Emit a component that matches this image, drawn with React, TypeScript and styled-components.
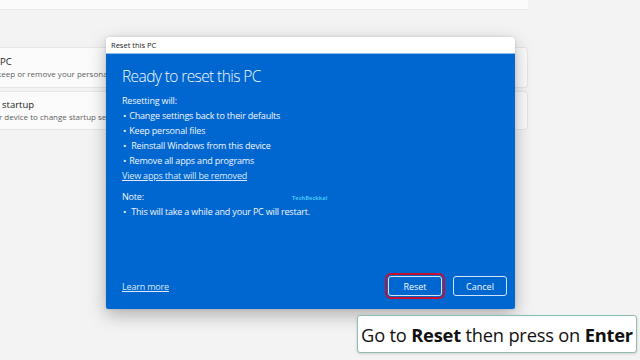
import styled, { createGlobalStyle } from "styled-components";

const GlobalStyle = createGlobalStyle`
  html, body {
    margin: 0;
    padding: 0;
    background: #f3f3f3;
  }
  body {
    font-family: "Open Sans", "Noto Sans", sans-serif;
  }
`;

const Screen = styled.div`
  position: relative;
  width: 640px;
  height: 360px;
  overflow: hidden;
  background: #f3f3f3;
`;

const SettingsColumn = styled.div`
  width: 528px;
  display: flex;
  flex-direction: column;
  gap: 3px;
`;

const TopCard = styled.div`
  height: 9px;
  background: #fbfbfb;
  border-bottom: 1px solid #e8e8e8;
  margin-bottom: 34px;
`;

const SettingCard = styled.div<{ $height: number }>`
  height: ${(p) => p.$height}px;
  background: #fbfbfb;
  border: 1px solid #e6e6e6;
  border-left: none;
  border-radius: 0 4px 4px 0;
  display: flex;
  flex-direction: column;
  justify-content: center;
  box-sizing: border-box;
  overflow: hidden;
`;

const SettingTitle = styled.div<{ $indent?: number }>`
  font-size: 9.5px;
  color: #1b1b1b;
  line-height: 12px;
  margin-left: ${(p) => p.$indent ?? 0}px;
  white-space: nowrap;
`;

const SettingSub = styled.div<{ $indent?: number }>`
  font-size: 8px;
  color: #5f5f5f;
  line-height: 11px;
  margin-left: ${(p) => p.$indent ?? 0}px;
  white-space: nowrap;
`;

const Dialog = styled.div`
  position: absolute;
  left: 106px;
  top: 37px;
  width: 409px;
  height: 272px;
  display: flex;
  flex-direction: column;
  border-radius: 4px 4px 2px 2px;
  overflow: hidden;
  box-shadow: 0 6px 18px rgba(0, 0, 0, 0.28), 0 0 3px rgba(0, 0, 0, 0.12);
`;

const TitleBar = styled.div`
  height: 17px;
  flex: none;
  background: #ffffff;
  border-bottom: 1px solid #8cc0f0;
  box-sizing: border-box;
  display: flex;
  align-items: center;
  padding-left: 5px;
  font-size: 7.5px;
  color: #1a1a1a;
`;

const DialogBody = styled.div`
  position: relative;
  flex: 1;
  background: #0067d0;
  color: #f2f6fc;
  display: flex;
  flex-direction: column;
  padding: 12px 8px 13px 16px;
`;

const Heading = styled.h1`
  margin: 0 0 7px;
  font-size: 15.5px;
  font-weight: 300;
  line-height: 20px;
  letter-spacing: -0.6px;
  color: #f4f8fd;
`;

const Line = styled.div<{ $indent?: number }>`
  font-size: 9px;
  line-height: 15px;
  padding-left: ${(p) => p.$indent ?? 0}px;
  white-space: nowrap;
  letter-spacing: -0.18px;
`;

const Bullet = styled.span<{ $gap: number }>`
  margin-right: ${(p) => p.$gap}px;
`;

const Link = styled.a<{ $drop?: number }>`
  font-size: 9px;
  line-height: 15px;
  color: #dbe9fa;
  text-decoration: underline;
  letter-spacing: -0.18px;
  align-self: flex-start;
  padding-top: ${(p) => p.$drop ?? 0}px;
`;

const Gap = styled.div<{ $h: number }>`
  height: ${(p) => p.$h}px;
`;

const Watermark = styled.span`
  position: absolute;
  left: 186px;
  top: 140px;
  font-size: 5.5px;
  font-weight: 700;
  color: #47c6f5;
  letter-spacing: 0.1px;
`;

const Footer = styled.div`
  margin-top: auto;
  display: flex;
  align-items: center;
  justify-content: space-between;
`;

const Buttons = styled.div`
  display: flex;
  align-items: center;
  gap: 11px;
`;

const Button = styled.button<{ $focused?: boolean }>`
  width: 54px;
  height: 20px;
  box-sizing: border-box;
  background: #0067d0;
  color: #f4f8fd;
  border: 1.5px solid #cfe4fb;
  border-radius: 3px;
  font-family: "Open Sans", "Noto Sans", sans-serif;
  font-size: 9px;
  padding: 0;
  outline: ${(p) => (p.$focused ? "2px solid #c8102e" : "none")};
  outline-offset: 1px;
`;

const Caption = styled.div`
  position: absolute;
  left: 357px;
  top: 315px;
  width: 280px;
  height: 38px;
  box-sizing: border-box;
  background: #ffffff;
  border: 1px solid #8fbdb2;
  border-radius: 3px;
  box-shadow: 0 1px 3px rgba(0, 0, 0, 0.15);
  display: flex;
  align-items: center;
  justify-content: center;
  font-size: 18.3px;
  letter-spacing: -0.2px;
  color: #111111;
  white-space: nowrap;
`;

export default function App() {
  return (
    <Screen>
      <GlobalStyle />
      <SettingsColumn>
        <TopCard />
        <SettingCard $height={41}>
          <SettingTitle>PC</SettingTitle>
          <SettingSub $indent={-3}>keep or remove your personal files</SettingSub>
        </SettingCard>
        <SettingCard $height={39}>
          <SettingTitle $indent={2}>startup</SettingTitle>
          <SettingSub $indent={-1}>r device to change startup settings</SettingSub>
        </SettingCard>
      </SettingsColumn>

      <Dialog>
        <TitleBar>Reset this PC</TitleBar>
        <DialogBody>
          <Heading>Ready to reset this PC</Heading>
          <Line>Resetting will:</Line>
          <Line $indent={1}><Bullet $gap={3}>•</Bullet>Change settings back to their defaults</Line>
          <Line $indent={1}><Bullet $gap={3}>•</Bullet>Keep personal files</Line>
          <Line $indent={1}><Bullet $gap={5}>•</Bullet>Reinstall Windows from this device</Line>
          <Line $indent={1}><Bullet $gap={3}>•</Bullet>Remove all apps and programs</Line>
          <Link>View apps that will be removed</Link>
          <Gap $h={6} />
          <Line>Note:</Line>
          <Line $indent={1}><Bullet $gap={5}>•</Bullet>This will take a while and your PC will restart.</Line>
          <Watermark>TechBeckkal</Watermark>
          <Footer>
            <Link $drop={3}>Learn more</Link>
            <Buttons>
              <Button $focused>Reset</Button>
              <Button>Cancel</Button>
            </Buttons>
          </Footer>
        </DialogBody>
      </Dialog>

      <Caption>
        <span>
          Go to <b>Reset</b> then press on <b>Enter</b>
        </span>
      </Caption>
    </Screen>
  );
}
